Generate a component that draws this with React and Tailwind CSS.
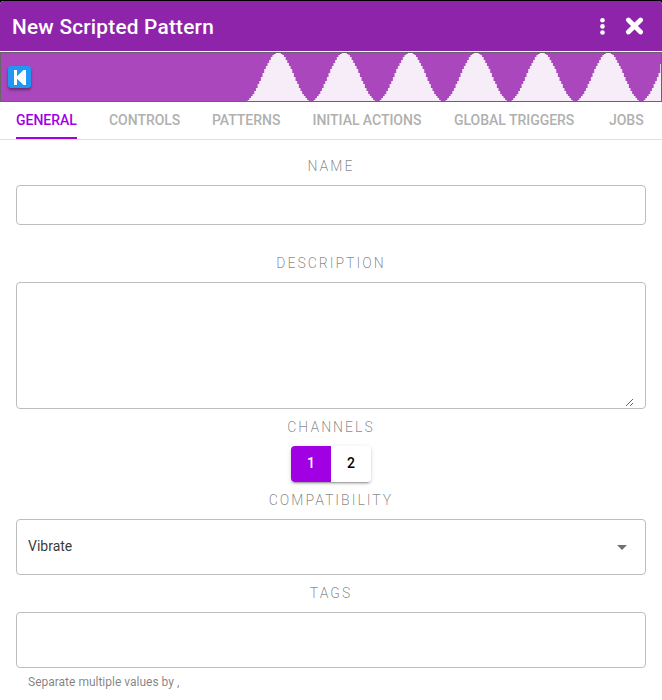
import React from "react";

const TABS = [
  { label: "General", width: "w-[61px]", active: true },
  { label: "Controls", width: "w-[71px]" },
  { label: "Patterns", width: "w-[68.5px]" },
  { label: "Initial Actions", width: "w-[109.5px]" },
  { label: "Global Triggers", width: "w-[121px]" },
  { label: "Jobs", width: "w-[36px]" },
];

const SAMPLE_WIDTH = 1.65;

// Stepped sine wave, forty samples to a period.
function wavePath() {
  let d = "M244 48";
  for (let i = 0; i < 252; i++) {
    const h = Math.round(24.2 * (1 - Math.cos((2 * Math.PI * i) / 40)));
    const x = 243.4 + i * SAMPLE_WIDTH;
    d += `L${x.toFixed(2)} ${48 - h}H${(x + SAMPLE_WIDTH).toFixed(2)}`;
  }
  return d + "V11H660V48Z";
}

function Label({ children }) {
  return (
    <div className="h-5 text-center text-[14px] leading-5 font-light tracking-[2px] text-black/48 uppercase">
      {children}
    </div>
  );
}

export default function App() {
  return (
    <div className="h-[700px] w-[662px] overflow-hidden bg-black pt-px font-['Roboto','Liberation_Sans',sans-serif]">
      <div className="flex h-[699px] flex-col overflow-hidden rounded-t-[4px] bg-white">
        <header className="flex h-[50px] shrink-0 items-center bg-[#8e24aa] pr-[18px] pl-3 text-white">
          <h1 className="flex-1 pt-px text-[20.8px] leading-[50px] font-medium tracking-[0.22px]">New Scripted Pattern</h1>
          <button aria-label="Menu" className="mr-[20px]">
            <svg width="5" height="17" viewBox="0 0 5 17" fill="white">
              <circle cx="2.5" cy="2.3" r="2.3" />
              <circle cx="2.5" cy="8.4" r="2.3" />
              <circle cx="2.5" cy="14.5" r="2.3" />
            </svg>
          </button>
          <button aria-label="Close">
            <svg width="19" height="18" viewBox="0 0 19 18" fill="none" stroke="white" strokeWidth="4.8" strokeLinecap="round">
              <path d="M3.4 3 15.6 15M15.6 3 3.4 15" />
            </svg>
          </button>
        </header>

        <div className="relative mt-px h-[50px] shrink-0 border border-[#666] bg-[#ab47bc]">
          <svg className="block" width="660" height="48" viewBox="0 0 660 48">
            <path d={wavePath()} fill="#f6edf8" />
            <path d="M658 15h1v4h-1z" fill="#ab47bc" />
          </svg>
          <button aria-label="Restart" className="absolute top-[13px] left-[7px] flex h-[22px] w-[23px] items-center justify-center rounded-[3px] bg-[#2196f3] shadow-[0_2px_3px_rgba(0,0,0,0.4)]">
            <svg width="12" height="15" viewBox="0 0 12 15" fill="white">
              <path d="M0 0H3V6.2L9.5 0H12V15H9.5L3 8.8V15H0Z" />
            </svg>
          </button>
        </div>

        <nav className="flex h-[38px] shrink-0 gap-8 border-b border-black/12 px-4">
          {TABS.map((tab) => (
            <button
              key={tab.label}
              className={`${tab.width} shrink-0 border-b-2 pt-px text-left text-[14px] leading-[35px] font-medium tracking-[-0.03px] whitespace-nowrap uppercase last:ml-[2px] ${
                tab.active ? "border-[#a000e2] text-[#a000e2]" : "border-transparent text-[#b0b0b0]"
              }`}
            >
              {tab.label}
            </button>
          ))}
        </nav>

        <main className="flex flex-col px-4 pt-[16px]">
          <Label>Name</Label>
          <input aria-label="Name" className="mt-[9px] h-[40px] rounded-[4px] border border-[#bdbdbd] px-3 outline-none" />

          <div className="mt-[28px]">
            <Label>Description</Label>
          </div>
          <div className="mt-[9px] flex h-[127px] rounded-[4px] border border-[#bdbdbd] pr-[11px] pb-px">
            <textarea aria-label="Description" className="h-full w-full resize px-3 outline-none" />
          </div>

          <div className="mt-[8px]">
            <Label>Channels</Label>
          </div>
          <div className="mt-[9px] flex h-[36px] w-[80px] self-center overflow-visible rounded-[4px] text-[14px] font-medium shadow-[0_3px_1px_-2px_rgba(0,0,0,0.2),0_2px_2px_rgba(0,0,0,0.14),0_1px_5px_rgba(0,0,0,0.12)]">
            <button className="w-10 rounded-l-[4px] bg-[#a000e2] pb-[2px] text-white">1</button>
            <button className="w-10 rounded-r-[4px] bg-white pb-[2px] text-black">2</button>
          </div>

          <div className="mt-[8px]">
            <Label>Compatibility</Label>
          </div>
          <div className="mt-[9px] flex h-[56px] items-center justify-between rounded-[4px] border border-[#bdbdbd] pr-[18px] pb-[2px] pl-[11px] text-[14px] text-black/80">
            <span>Vibrate</span>
            <svg width="10" height="5" viewBox="0 0 10 5" className="mt-[3px]" fill="#707070">
              <path d="M0 0H10L5 5Z" />
            </svg>
          </div>

          <div className="mt-[8px]">
            <Label>Tags</Label>
          </div>
          <input aria-label="Tags" className="mt-[9px] h-[56px] rounded-[4px] border border-[#bdbdbd] px-3 outline-none" />
          <p className="mt-[4px] pl-3 text-[12px] leading-5 text-black/50">Separate multiple values by ,</p>
        </main>
      </div>
    </div>
  );
}
